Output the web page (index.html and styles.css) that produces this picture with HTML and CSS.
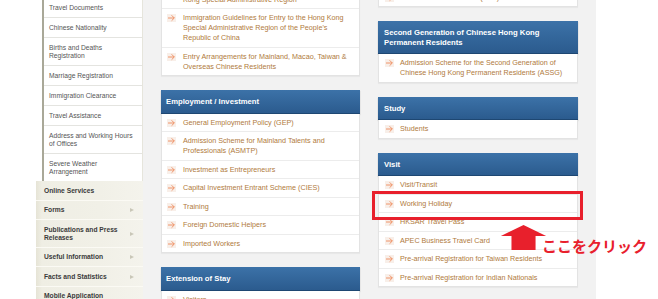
FILE: index.html
```html
<!DOCTYPE html>
<html lang="en">
<head>
<meta charset="utf-8">
<title>Visas</title>
<link rel="stylesheet" href="styles.css">
</head>
<body>
<div class="page">
  <aside class="sidebar">
    <ul class="submenu">
      <li>Travel Documents</li>
      <li>Chinese Nationality</li>
      <li>Births and Deaths Registration</li>
      <li>Marriage Registration</li>
      <li>Immigration Clearance</li>
      <li>Travel Assistance</li>
      <li>Address and Working Hours of Offices</li>
      <li>Severe Weather Arrangement</li>
    </ul>
    <ul class="mainmenu">
      <li><span>Online Services</span></li>
      <li><span>Forms</span><i class="tri"></i></li>
      <li><span>Publications and Press Releases</span><i class="tri"></i></li>
      <li><span>Useful Information</span><i class="tri"></i></li>
      <li><span>Facts and Statistics</span><i class="tri"></i></li>
      <li><span>Mobile Application</span></li>
    </ul>
  </aside>

  <main class="content">
    <div class="col col-mid">
      <section class="card">
        <ul class="links">
          <li><svg class="arr" viewBox="0 0 9 8"><path d="M1 4h6.3M4.6 1.3L7.3 4 4.6 6.7"/></svg><span>Immigration Arrangements for Residents of the Hong Kong Special Administrative Region</span></li>
          <li><svg class="arr" viewBox="0 0 9 8"><path d="M1 4h6.3M4.6 1.3L7.3 4 4.6 6.7"/></svg><span>Immigration Guidelines for Entry to the Hong Kong Special Administrative Region of the People's Republic of China</span></li>
          <li><svg class="arr" viewBox="0 0 9 8"><path d="M1 4h6.3M4.6 1.3L7.3 4 4.6 6.7"/></svg><span>Entry Arrangements for Mainland, Macao, Taiwan &amp; Overseas Chinese Residents</span></li>
        </ul>
      </section>
      <section class="card">
        <h2 class="card-head">Employment / Investment</h2>
        <ul class="links">
          <li><svg class="arr" viewBox="0 0 9 8"><path d="M1 4h6.3M4.6 1.3L7.3 4 4.6 6.7"/></svg><span>General Employment Policy (GEP)</span></li>
          <li><svg class="arr" viewBox="0 0 9 8"><path d="M1 4h6.3M4.6 1.3L7.3 4 4.6 6.7"/></svg><span>Admission Scheme for Mainland Talents and Professionals (ASMTP)</span></li>
          <li><svg class="arr" viewBox="0 0 9 8"><path d="M1 4h6.3M4.6 1.3L7.3 4 4.6 6.7"/></svg><span>Investment as Entrepreneurs</span></li>
          <li><svg class="arr" viewBox="0 0 9 8"><path d="M1 4h6.3M4.6 1.3L7.3 4 4.6 6.7"/></svg><span>Capital Investment Entrant Scheme (CIES)</span></li>
          <li><svg class="arr" viewBox="0 0 9 8"><path d="M1 4h6.3M4.6 1.3L7.3 4 4.6 6.7"/></svg><span>Training</span></li>
          <li><svg class="arr" viewBox="0 0 9 8"><path d="M1 4h6.3M4.6 1.3L7.3 4 4.6 6.7"/></svg><span>Foreign Domestic Helpers</span></li>
          <li><svg class="arr" viewBox="0 0 9 8"><path d="M1 4h6.3M4.6 1.3L7.3 4 4.6 6.7"/></svg><span>Imported Workers</span></li>
        </ul>
      </section>
      <section class="card">
        <h2 class="card-head">Extension of Stay</h2>
        <ul class="links">
          <li><svg class="arr" viewBox="0 0 9 8"><path d="M1 4h6.3M4.6 1.3L7.3 4 4.6 6.7"/></svg><span>Visitors</span></li>
        </ul>
      </section>
    </div>

    <div class="col col-right">
      <section class="card">
        <ul class="links">
          <li><svg class="arr" viewBox="0 0 9 8"><path d="M1 4h6.3M4.6 1.3L7.3 4 4.6 6.7"/></svg><span>Certificate of Entitlement (CoE)</span></li>
        </ul>
      </section>
      <section class="card">
        <h2 class="card-head">Second Generation of Chinese Hong Kong Permanent Residents</h2>
        <ul class="links">
          <li><svg class="arr" viewBox="0 0 9 8"><path d="M1 4h6.3M4.6 1.3L7.3 4 4.6 6.7"/></svg><span>Admission Scheme for the Second Generation of Chinese Hong Kong Permanent Residents (ASSG)</span></li>
        </ul>
      </section>
      <section class="card">
        <h2 class="card-head">Study</h2>
        <ul class="links">
          <li><svg class="arr" viewBox="0 0 9 8"><path d="M1 4h6.3M4.6 1.3L7.3 4 4.6 6.7"/></svg><span>Students</span></li>
        </ul>
      </section>
      <section class="card">
        <h2 class="card-head">Visit</h2>
        <ul class="links">
          <li><svg class="arr" viewBox="0 0 9 8"><path d="M1 4h6.3M4.6 1.3L7.3 4 4.6 6.7"/></svg><span>Visit/Transit</span></li>
          <li><svg class="arr" viewBox="0 0 9 8"><path d="M1 4h6.3M4.6 1.3L7.3 4 4.6 6.7"/></svg><span>Working Holiday</span></li>
          <li><svg class="arr" viewBox="0 0 9 8"><path d="M1 4h6.3M4.6 1.3L7.3 4 4.6 6.7"/></svg><span>HKSAR Travel Pass</span></li>
          <li><svg class="arr" viewBox="0 0 9 8"><path d="M1 4h6.3M4.6 1.3L7.3 4 4.6 6.7"/></svg><span>APEC Business Travel Card</span></li>
          <li><svg class="arr" viewBox="0 0 9 8"><path d="M1 4h6.3M4.6 1.3L7.3 4 4.6 6.7"/></svg><span>Pre-arrival Registration for Taiwan Residents</span></li>
          <li><svg class="arr" viewBox="0 0 9 8"><path d="M1 4h6.3M4.6 1.3L7.3 4 4.6 6.7"/></svg><span>Pre-arrival Registration for Indian Nationals</span></li>
        </ul>
      </section>
    </div>
  </main>

  <div class="highlight-box"></div>
  <svg class="callout-arrow" viewBox="0 0 48 27"><polygon points="23.5,0 47,11.5 36,11.5 36,26 11,26 11,11.5 0,11.5"/></svg>
  <div class="callout-text">ここをクリック</div>
</div>
</body>
</html>
```

FILE: styles.css
```css
* { box-sizing: border-box; }

html, body {
  margin: 0;
  padding: 0;
  background: #ffffff;
}

body {
  font-family: "Liberation Sans", Arial, sans-serif;
}

ul { list-style: none; margin: 0; padding: 0; }
h2 { margin: 0; }

.page {
  position: relative;
  width: 658px;
  height: 299px;
  overflow: hidden;
  display: flex;
  align-items: flex-start;
  background: #ffffff;
}

/* ---------- sidebar ---------- */
.sidebar {
  flex: 0 0 107px;
  margin-left: 36px;
  margin-top: -2px;
}

.submenu {
  margin-left: 6px;
  background: #ffffff;
  border-left: 2px solid #a9a898;
  border-right: 1px solid #e6e5dc;
}

.submenu li {
  padding: 6px 8px 5px 5px;
  font-size: 6.7px;
  line-height: 8px;
  color: #555555;
  border-bottom: 1px solid #e4e4e0;
}

.submenu li:last-child { border-bottom: none; }

.mainmenu {
  background: linear-gradient(to right, #e6e4d6 0, #efeee4 6px, #f1f0e7 60%, #f4f3ec 100%);
}

.mainmenu li {
  display: flex;
  align-items: center;
  justify-content: space-between;
  gap: 6px;
  padding: 5.5px 9px 5px 8px;
  font-size: 6.7px;
  line-height: 8px;
  font-weight: bold;
  color: #3a3a3a;
  border-bottom: 1px solid #fbfaf4;
}

.tri {
  flex: 0 0 auto;
  width: 0;
  height: 0;
  border-top: 2.5px solid transparent;
  border-bottom: 2.5px solid transparent;
  border-left: 4px solid #c9c7b8;
}

/* ---------- content ---------- */
.content {
  flex: 0 0 453px;
  height: 299px;
  background: #f2f2f2;
  display: flex;
  align-items: flex-start;
  gap: 18px;
  padding: 0 18px;
}

.col {
  display: flex;
  flex-direction: column;
  gap: 14px;
}

.col-mid { flex: 0 0 199px; margin-top: -20.5px; }
.col-right { flex: 0 0 200px; margin-top: -12.5px; }

.card {
  box-shadow: 0 1px 1px rgba(0, 0, 0, 0.04);
}

.card-head {
  padding: 7px 6px 6px 5px;
  font-size: 7.7px;
  line-height: 9.5px;
  font-weight: bold;
  color: #ffffff;
  background: linear-gradient(#3c72a8, #2b5b8e);
  border-bottom: 1px solid #1e4772;
  box-shadow: 0 1px 1px rgba(0, 0, 0, 0.25);
}

.col-right .card-head { padding-left: 6px; }

.links {
  background: #ffffff;
  border: 1px solid #e3e3e3;
  border-top: none;
}

.col .card:first-child .links { border-top: 1px solid #e3e3e3; }

.links li {
  display: flex;
  align-items: flex-start;
  gap: 7px;
  padding: 4px 4px 3.5px 5px;
  font-size: 7.2px;
  line-height: 10px;
  color: #b07a3c;
  border-bottom: 1px solid #ececec;
}

.col-right .links li { padding-left: 6px; gap: 6px; }

.links li:last-child { border-bottom: none; }

.arr {
  flex: 0 0 9px;
  width: 9px;
  height: 8px;
  margin-top: 1px;
  background: #f8efe9;
  fill: none;
  stroke: #ee8a5b;
  stroke-width: 0.9;
}

/* ---------- annotation overlay ---------- */
.highlight-box {
  position: absolute;
  left: 372px;
  top: 191px;
  width: 211px;
  height: 29px;
  border: 3px solid #e8202c;
}

.callout-arrow {
  position: absolute;
  left: 500px;
  top: 225px;
  width: 48px;
  height: 26px;
  fill: #e8202c;
}

.callout-text {
  position: absolute;
  left: 542px;
  top: 238px;
  font-family: "Noto Sans CJK JP", sans-serif;
  font-size: 15px;
  line-height: 15px;
  font-weight: bold;
  color: #e8202c;
  white-space: nowrap;
}
```
